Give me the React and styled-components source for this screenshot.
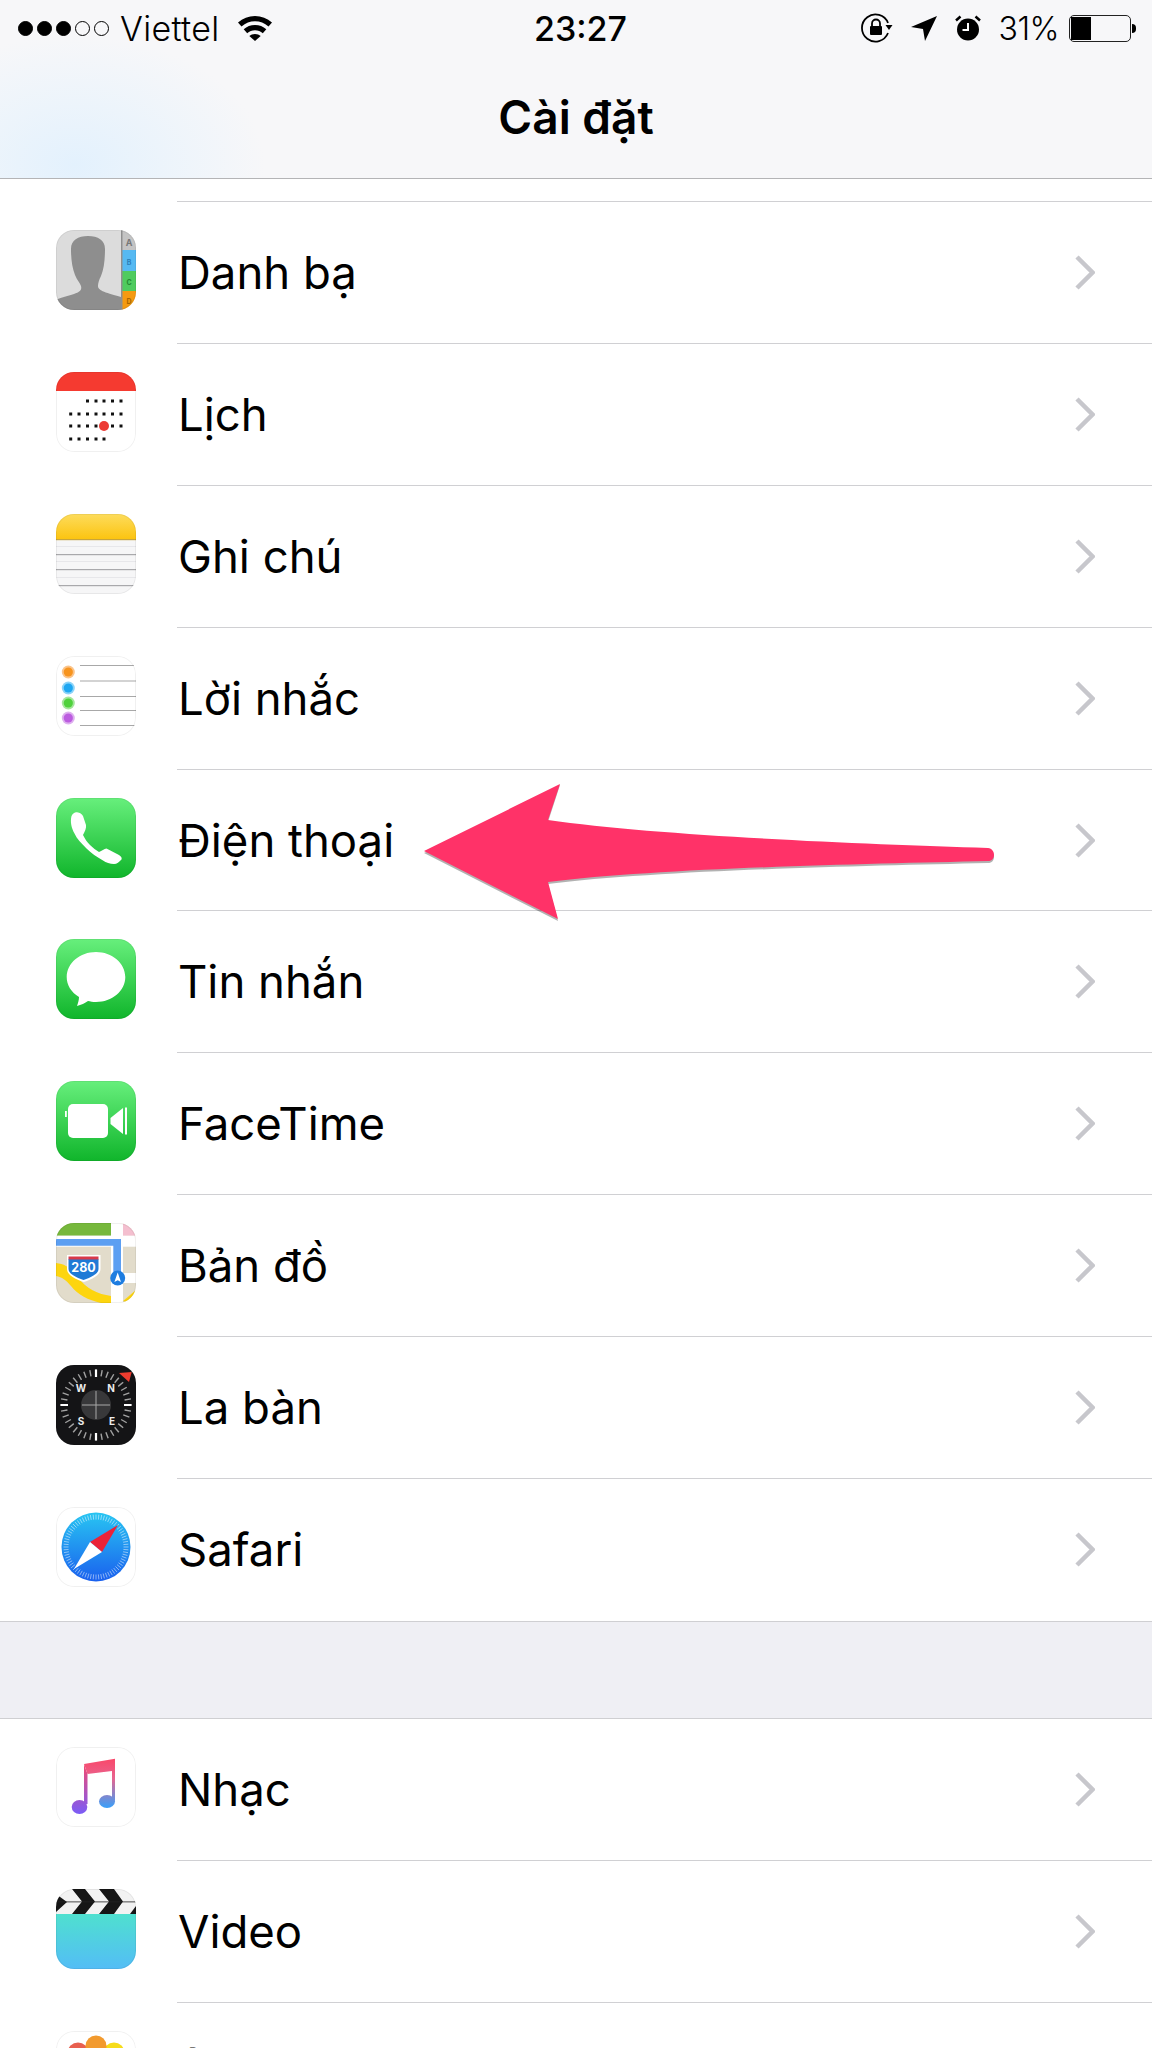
import React from "react";
import styled, { createGlobalStyle } from "styled-components";

const FONT = `Inter, "Noto Sans", "Liberation Sans", sans-serif`;

const GlobalStyle = createGlobalStyle`
  html, body {
    margin: 0;
    padding: 0;
    background: #fff;
  }
  body {
    font-family: ${FONT};
  }
`;

const Contacts = () => (
  <svg viewBox="0 0 80 80" width="80" height="80">
    <rect width="80" height="80" fill="#dcdcdc" />
    <path d="M66 0h14v20H66z" fill="#c4c4c4" />
    <path d="M66 20h14v21H66z" fill="#56b9f2" />
    <path d="M66 41h14v20H66z" fill="#4fcb5f" />
    <path d="M66 61h14v19H66z" fill="#f59a11" />
    <rect x="65" width="1.5" height="80" fill="#8f8f8f" />
    <text x="73" y="16" fontSize="9" fontWeight="700" fill="#777" textAnchor="middle" fontFamily={FONT}>A</text>
    <text x="73" y="35" fontSize="7" fontWeight="700" fill="#2b7fb8" textAnchor="middle" fontFamily={FONT}>B</text>
    <text x="73" y="55" fontSize="7" fontWeight="700" fill="#238a33" textAnchor="middle" fontFamily={FONT}>C</text>
    <text x="73" y="74" fontSize="7" fontWeight="700" fill="#a76500" textAnchor="middle" fontFamily={FONT}>D</text>
    <path d="M15 19C15 10 22 6 32 6s17 4 17 13c0 10-1 20-4 27-2 4-3 7-3 10 0 4 5 6 23 11v13H0V70c3-2 12-4 18-6 6-2 8-4 7-8-1-3-4-6-6-11-3-8-4-16-4-26z" fill="#8e8e8e" />
  </svg>
);

const dotColumns = [14.7, 23, 31.5, 40, 48, 56.5, 65];

const dotRows = [
  dotColumns.slice(2).map(x => [x, 29]),
  dotColumns.map(x => [x, 42]),
  dotColumns.filter(x => x !== 48).map(x => [x, 54]),
  dotColumns.slice(0, 5).map(x => [x, 67])
].flat();

const Calendar = () => (
  <svg viewBox="0 0 80 80" width="80" height="80">
    <rect width="80" height="80" fill="#fff" />
    <rect width="80" height="19" fill="#f53a30" />
    {dotRows.map(([x, y], i) => (
      <rect key={i} x={x - 1.5} y={y - 1.5} width="3" height="3" fill="#111" />
    ))}
    <circle cx="48" cy="54" r="5" fill="#ec3a34" />
  </svg>
);

const Notes = () => (
  <svg viewBox="0 0 80 80" width="80" height="80">
    <defs>
      <linearGradient id="notesTop" x1="0" y1="0" x2="0" y2="1">
        <stop offset="0" stopColor="#fddc5c" />
        <stop offset="1" stopColor="#fcc30e" />
      </linearGradient>
    </defs>
    <rect width="80" height="80" fill="#f6f6f7" />
    <rect width="80" height="26" fill="url(#notesTop)" />
    <rect y="25" width="80" height="1.2" fill="#c9a53a" />
    {[40, 55, 71].map(y => (
      <rect key={y} y={y} width="80" height="1.2" fill="#a9a9ac" />
    ))}
    {[32, 47, 63].map(y => (
      <rect key={y} y={y} width="80" height="0.8" fill="#e4e4e6" />
    ))}
  </svg>
);

const reminderDots = [
  [16, "#f7941e", "#fbc48a"],
  [32, "#1ea7f2", "#8bd3f8"],
  [47, "#4fd13c", "#a5e69c"],
  [62, "#bc5ce0", "#deb0ef"]
];

const Reminders = () => (
  <svg viewBox="0 0 80 80" width="80" height="80">
    <rect width="80" height="80" fill="#fff" />
    {[9, 24.5, 40, 54, 69].map(y => (
      <rect key={y} x="24" y={y} width="56" height="1" fill="#a8a8a8" />
    ))}
    {reminderDots.map(([y, fill, ring]) => (
      <g key={y}>
        <circle cx="12.3" cy={y} r="6.5" fill={ring} />
        <circle cx="12.3" cy={y} r="4.6" fill={fill} />
      </g>
    ))}
  </svg>
);

const GreenBg = ({ id }) => (
  <>
    <defs>
      <linearGradient id={id} x1="0" y1="0" x2="0" y2="1">
        <stop offset="0" stopColor="#67ef7c" />
        <stop offset="1" stopColor="#10b52b" />
      </linearGradient>
    </defs>
    <rect width="80" height="80" fill={`url(#${id})`} />
  </>
);

const Phone = () => (
  <svg viewBox="0 0 80 80" width="80" height="80">
    <GreenBg id="phoneBg" />
    <path d="M15.500 18C17 15 19 14 21 14.300 24 15 26 16 27 18L30 27C30.500 30 29 33 27 37 29 41 31 44 34 47 37 50 40 52 43 54 46 53 48 51 50.500 50.500L63 57C65.500 58.500 66 60 65.500 61.500 63 64 61 66 58 66 54 66 50 64.500 47 62.500 41 59 35 55 30.500 50.500 25 45 21 41 18.500 35.500 15.500 30 14 24 15.500 18z" fill="#fff" />
  </svg>
);

const Messages = () => (
  <svg viewBox="0 0 80 80" width="80" height="80">
    <GreenBg id="messagesBg" />
    <path d="M40 13C24 13 10.700 24 10.700 38 10.700 46 15 53 23 58 23 61 22 64 21 67 25 66 29 64 32 62 34 62.500 37 63 40 63 56 63 69.300 52 69.300 38 69.300 24 56 13 40 13z" fill="#fff" />
  </svg>
);

const FaceTime = () => (
  <svg viewBox="0 0 80 80" width="80" height="80">
    <GreenBg id="faceTimeBg" />
    <rect x="12" y="23" width="40" height="34" rx="5" fill="#fff" />
    <rect x="9" y="30" width="1.8" height="6" fill="#fff" />
    <path d="M54.500 37L67 27v26L54.500 43z" fill="#fff" />
    <rect x="69" y="26.500" width="2" height="27" fill="#fff" />
  </svg>
);

const Maps = () => (
  <svg viewBox="0 0 80 80" width="80" height="80">
    <rect width="80" height="80" fill="#e2dccb" />
    <path d="M0 0h55v12.700H0z" fill="#76b83c" />
    <path d="M67 0h13v12.700H67z" fill="#f4bfcf" />
    <rect x="55" width="12" height="80" fill="#fff" />
    <rect y="12.700" width="80" height="11" fill="#fff" />
    <path d="M67 50h13v10H67z" fill="#fff" />
    <path d="M0 40C10 41 16 46 22 54 30 66 42 71 55 73V80H45C32 77 22 72 15 63 10 57 6 54 0 53z" fill="#fdd50f" />
    <path d="M67 78l13-11v6l-6 7z" fill="#fdd50f" />
    <path d="M0 16h65v34h-7.700V22.700H0z" fill="#5c9ff2" />
    <path d="M11 32h33.500v14c0 6-8 10-16.700 13C19 56 11 52 11 46z" fill="#fff" />
    <path d="M12.500 36h30v10c0 5-7 8-15 11C19.500 54 12.500 51 12.500 46z" fill="#1f7ad6" />
    <path d="M12.500 33.500h30V36.500h-30z" fill="#d8394a" />
    <text x="27.500" y="48.500" fontSize="12.500" fontWeight="700" fill="#fff" textAnchor="middle" fontFamily={FONT}>280</text>
    <circle cx="61.700" cy="55" r="7.500" fill="#1e7de0" />
    <path d="M61.700 49.500l3.300 9.500-3.300-1.800-3.300 1.800z" fill="#fff" />
  </svg>
);

const ticks = (count, inner, outer, cx, cy, color, width) =>
  Array.from({ length: count }).map((_, i) => {
    const a = (i / count) * Math.PI * 2;
    return (
      <line
        key={i}
        x1={cx + Math.cos(a) * inner}
        y1={cy + Math.sin(a) * inner}
        x2={cx + Math.cos(a) * outer}
        y2={cy + Math.sin(a) * outer}
        stroke={color}
        strokeWidth={width}
      />
    );
  });

const compassLetters = [
  ["W", 25, 26.500],
  ["N", 55, 26.500],
  ["S", 25, 59.500],
  ["E", 56, 59.500]
];

const Compass = () => (
  <svg viewBox="0 0 80 80" width="80" height="80">
    <rect width="80" height="80" fill="#141416" />
    <circle cx="40" cy="40" r="15" fill="#38383a" />
    {ticks(36, 29, 35.500, 40, 40, "#a2a2a2", 1.4)}
    {ticks(4, 28, 35.500, 40, 40, "#fff", 2.2)}
    <path d="M63 8l12.700-1L73 17z" fill="#ee3c2f" />
    <rect x="26" y="39.500" width="28" height="1" fill="#a8a8a8" />
    <rect x="39.500" y="26" width="1" height="28" fill="#a8a8a8" />
    {compassLetters.map(([l, x, y]) => (
      <text key={l} x={x} y={y} fontSize="10" fontWeight="700" fill="#ececec" textAnchor="middle" fontFamily={FONT}>{l}</text>
    ))}
  </svg>
);

const Safari = () => (
  <svg viewBox="0 0 80 80" width="80" height="80">
    <defs>
      <linearGradient id="safariBg" x1="0" y1="0" x2="0" y2="1">
        <stop offset="0" stopColor="#28c5f2" />
        <stop offset="1" stopColor="#1a60ee" />
      </linearGradient>
    </defs>
    <rect width="80" height="80" fill="#fff" />
    <circle cx="40" cy="40" r="34.500" fill="url(#safariBg)" />
    {ticks(72, 27.500, 32.500, 40, 40, "rgba(255,255,255,0.7)", 0.7)}
    <path d="M62 18L46 45 34 35z" fill="#ea2238" />
    <path d="M18 62l16-27 12 10z" fill="#fff" />
  </svg>
);

const Music = () => (
  <svg viewBox="0 0 80 80" width="80" height="80">
    <defs>
      <linearGradient id="musicLeft" gradientUnits="userSpaceOnUse" x1="0" y1="15" x2="0" y2="66">
        <stop offset="0" stopColor="#f9486a" />
        <stop offset="1" stopColor="#7c5cf5" />
      </linearGradient>
      <linearGradient id="musicRight" gradientUnits="userSpaceOnUse" x1="0" y1="12" x2="0" y2="60">
        <stop offset="0" stopColor="#f9486a" />
        <stop offset="0.4" stopColor="#e8648f" />
        <stop offset="1" stopColor="#3d9ef7" />
      </linearGradient>
    </defs>
    <rect width="80" height="80" fill="#fff" />
    <path d="M28 17v40h3.500V27z" fill="url(#musicLeft)" />
    <ellipse cx="23.500" cy="60" rx="7.800" ry="7" fill="url(#musicLeft)" />
    <path d="M28 17L59 11.700v42H56V24L31.500 27z" fill="url(#musicRight)" />
    <ellipse cx="51" cy="54.500" rx="8" ry="6.500" fill="url(#musicRight)" />
  </svg>
);

const Video = () => (
  <svg viewBox="0 0 80 80" width="80" height="80">
    <defs>
      <linearGradient id="videoBg" x1="0" y1="0" x2="0" y2="1">
        <stop offset="0" stopColor="#4fe0cf" />
        <stop offset="1" stopColor="#53bdf6" />
      </linearGradient>
    </defs>
    <rect width="80" height="25" fill="#f2f2f2" />
    <path d="M0 5L11 13 0 23zM16 0h13l10 12.500L29 25H16l10-12.500zM43 0h15l9 12.500L58 25H43l10-12.500zM74 25h6v-8z" fill="#161616" />
    <rect y="12.500" width="80" height="0.8" fill="#222" />
    <rect y="25" width="80" height="55" fill="url(#videoBg)" />
  </svg>
);

const Photos = () => (
  <svg viewBox="0 0 80 80" width="80" height="80">
    <rect width="80" height="80" fill="#fff" />
    <circle cx="22" cy="22" r="10.500" fill="#e8604f" />
    <circle cx="58" cy="22" r="10.500" fill="#f6dc1a" />
    <circle cx="40" cy="15" r="10.500" fill="#f29a2e" />
  </svg>
);

const Chevron = () => (
  <ChevronSvg viewBox="0 0 20 35" width="20" height="35">
    <path d="M2 2l15.500 15.500L2 33" fill="none" stroke="#c7c7cc" strokeWidth="4.500" />
  </ChevronSvg>
);

const firstGroup = [
  { label: "Danh bạ", Icon: Contacts },
  { label: "Lịch", Icon: Calendar },
  { label: "Ghi chú", Icon: Notes },
  { label: "Lời nhắc", Icon: Reminders },
  { label: "Điện thoại", Icon: Phone },
  { label: "Tin nhắn", Icon: Messages },
  { label: "FaceTime", Icon: FaceTime },
  { label: "Bản đồ", Icon: Maps },
  { label: "La bàn", Icon: Compass },
  { label: "Safari", Icon: Safari }
];

const secondGroup = [
  { label: "Nhạc", Icon: Music },
  { label: "Video", Icon: Video },
  { label: "Ảnh", Icon: Photos }
];

const renderRows = rows =>
  rows.map(({ label, Icon }, i) => (
    <Row key={label}>
      <IconBox>
        <Icon />
      </IconBox>
      <RowBody $last={i === rows.length - 1}>
        <Label>{label}</Label>
        <Chevron />
      </RowBody>
    </Row>
  ));

const App = () => (
  <Screen>
    <GlobalStyle />
    <Header>
      <StatusBar>
        <StatusLeft>
          <Signal>
            {[1, 1, 1, 0, 0].map((on, i) => (
              <SignalDot key={i} $on={on} />
            ))}
          </Signal>
          <Carrier>Viettel</Carrier>
          <svg viewBox="0 0 34 25" width="34" height="25">
            <path d="M17 0C10.500 0 4.800 2.400 0 6.500l3.500 4C7.500 7.200 12 5.300 17 5.300s9.500 1.900 13.500 5.200l3.500-4C29.200 2.400 23.500 0 17 0z" fill="#000" />
            <path d="M17 9c-4.300 0-8.200 1.500-11.300 4.200l3.500 4C11.400 15.300 14 14.300 17 14.300s5.600 1 7.800 2.900l3.500-4C25.200 10.500 21.300 9 17 9z" fill="#000" />
            <path d="M17 18c-2.200 0-4.200.8-5.700 2.100L17 25l5.700-4.900C21.200 18.800 19.200 18 17 18z" fill="#000" />
          </svg>
        </StatusLeft>
        <Clock>23:27</Clock>
        <StatusRight>
          <svg viewBox="0 0 32 30" width="32" height="30">
            <path d="M27 20A13.500 13.500 0 1 1 27 10" fill="none" stroke="#000" strokeWidth="1.800" />
            <path d="M24.500 12h7L28 17z" fill="#000" />
            <path d="M11 13v-2.500a4 4 0 0 1 8 0V13" fill="none" stroke="#000" strokeWidth="1.800" />
            <rect x="9" y="13" width="12" height="9" rx="1" fill="#000" />
          </svg>
          <svg viewBox="0 0 26 25" width="26" height="25">
            <path d="M26 0L14 25l-2-12L0 11z" fill="#000" />
          </svg>
          <svg viewBox="0 0 26 26" width="26" height="26">
            <circle cx="13" cy="14.500" r="11" fill="#000" />
            <path d="M13 8v7H7.500" fill="none" stroke="#fff" strokeWidth="2" />
            <path d="M1 5.500L5.500 1.500M25 5.500L20.500 1.500" stroke="#000" strokeWidth="2.500" />
          </svg>
          <Percent>31%</Percent>
          <Battery>
            <BatteryFill style={{ width: "34%" }} />
            <BatteryNub />
          </Battery>
        </StatusRight>
      </StatusBar>
      <Title>Cài đặt</Title>
    </Header>
    <ClippedRow />
    <Group>{renderRows(firstGroup)}</Group>
    <Spacer />
    <Group>{renderRows(secondGroup)}</Group>
    <Arrow viewBox="0 0 600 170" width="600" height="170">
      <path
        d="M4 71L140 3 128 40C240 56 440 64 568 68 576 69 576 81 568 81 440 84 240 88 128 102L138 139z"
        fill="#000"
        opacity="0.3"
        transform="translate(0 2)"
      />
      <path
        d="M4 71L140 4 128 40C240 56 440 64 568 68 576 69 576 81 568 81 440 84 240 88 128 102L138 139z"
        fill="#ff3268"
      />
    </Arrow>
  </Screen>
);

export default App;

const Screen = styled.div`
  position: relative;
  width: 1152px;
  height: 2048px;
  overflow: hidden;
  background: #fff;
  color: #000;
`;

const Header = styled.header`
  height: 178px;
  box-sizing: content-box;
  border-bottom: 1px solid #b4b4b6;
  background:
    radial-gradient(ellipse 190px 130px at 75px 165px, #e3f1fd 0%, rgba(232, 243, 252, 0.6) 55%, rgba(247, 247, 249, 0) 100%),
    #f7f7f9;
`;

const StatusBar = styled.div`
  height: 56px;
  padding: 0 15px 0 18px;
  display: grid;
  grid-template-columns: 1fr auto 1fr;
  align-items: center;
  font-size: 32px;
`;

const StatusLeft = styled.div`
  display: flex;
  align-items: center;
  gap: 11px;
`;

const Signal = styled.div`
  display: flex;
  gap: 4px;
`;

const SignalDot = styled.span`
  width: 15px;
  height: 15px;
  border-radius: 50%;
  box-sizing: border-box;
  background: ${props => (props.$on ? "#000" : "transparent")};
  border: 1px solid #000;
`;

const Carrier = styled.span`
  margin-right: 7px;
  font-size: 34px;
  font-weight: 300;
  letter-spacing: 0.3px;
`;

const Clock = styled.span`
  margin-left: 6px;
  font-weight: 500;
  font-size: 34px;
`;

const StatusRight = styled.div`
  display: flex;
  align-items: center;
  justify-content: flex-end;
  gap: 18px;
`;

const Percent = styled.span`
  font-weight: 300;
  letter-spacing: -0.5px;
  margin-right: -8px;
`;

const Battery = styled.div`
  position: relative;
  width: 62px;
  height: 27px;
  box-sizing: border-box;
  border: 1px solid #222;
  border-radius: 5px;
  padding: 1px;
  margin-right: 6px;
`;

const BatteryFill = styled.div`
  height: 100%;
  background: #000;
`;

const BatteryNub = styled.span`
  position: absolute;
  right: -6px;
  top: 8px;
  width: 4px;
  height: 9px;
  background: #000;
  border-radius: 0 4px 4px 0;
`;

const Title = styled.h1`
  margin: 0;
  height: 122px;
  line-height: 122px;
  text-align: center;
  font-size: 46px;
  font-weight: 600;
`;

const ClippedRow = styled.div`
  height: 22px;
  margin-left: 177px;
  border-bottom: 1px solid #d0d0d3;
`;

const Group = styled.section`
  background: #fff;
`;

const Row = styled.div`
  display: flex;
  height: 141.9px;
  padding-left: 56px;
  box-sizing: border-box;
`;

const IconBox = styled.div`
  flex: none;
  width: 80px;
  height: 80px;
  margin: 28px 41px 0 0;
  border-radius: 18px;
  overflow: hidden;
  position: relative;

  svg {
    display: block;
  }

  &::after {
    content: "";
    position: absolute;
    inset: 0;
    border-radius: 18px;
    box-shadow: inset 0 0 0 1px rgba(0, 0, 0, 0.06);
  }
`;

const RowBody = styled.div`
  flex: 1;
  display: flex;
  align-items: center;
  justify-content: space-between;
  padding-right: 57px;
  border-bottom: ${props => (props.$last ? "none" : "1px solid #d0d0d3")};
`;

const Label = styled.span`
  padding-left: 1px;
  font-size: 45.5px;
  font-weight: 380;
`;

const ChevronSvg = styled.svg`
  display: block;
`;

const Spacer = styled.div`
  height: 98px;
  background: #efeff4;
  box-sizing: border-box;
  border-top: 1px solid #cfcfd2;
  border-bottom: 1px solid #cfcfd2;
`;

const Arrow = styled.svg`
  position: absolute;
  left: 420px;
  top: 780px;
`;
